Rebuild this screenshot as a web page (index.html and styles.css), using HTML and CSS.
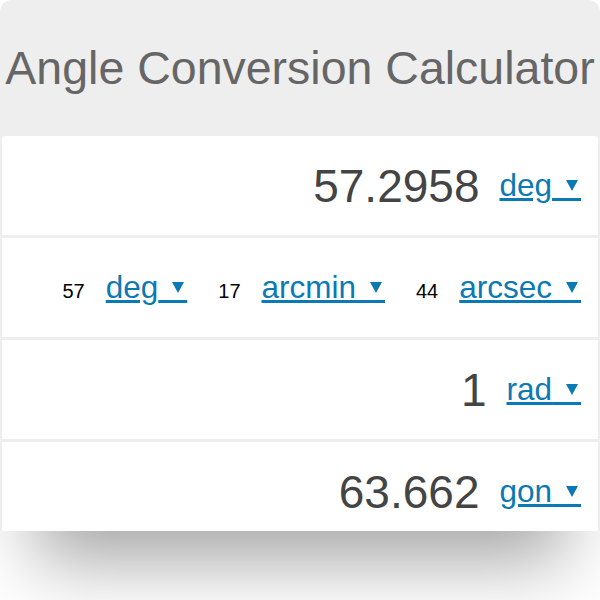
FILE: index.html
```html
<!DOCTYPE html>
<html>
<head>
<meta charset="utf-8">
<link rel="stylesheet" href="styles.css">
</head>
<body>
<div class="page">
<div class="card">
  <div class="header"><h1 class="title">Angle Conversion Calculator</h1></div>
  <div class="rows">
    <div class="row">
      <span class="value">57.2958</span>
      <a class="unit" href="#">deg<span class="caret">&nbsp;&nbsp;&nbsp;</span></a>
    </div>
    <div class="row">
      <div class="dms">
        <span class="num">57</span>
        <a class="unit" href="#">deg<span class="caret">&nbsp;&nbsp;&nbsp;</span></a>
        <span class="num">17</span>
        <a class="unit" href="#">arcmin<span class="caret">&nbsp;&nbsp;&nbsp;</span></a>
        <span class="num">44</span>
        <a class="unit" href="#">arcsec<span class="caret">&nbsp;&nbsp;&nbsp;</span></a>
      </div>
    </div>
    <div class="row">
      <span class="value">1</span>
      <a class="unit" href="#">rad<span class="caret">&nbsp;&nbsp;&nbsp;</span></a>
    </div>
    <div class="row">
      <span class="value">63.662</span>
      <a class="unit" href="#">gon<span class="caret">&nbsp;&nbsp;&nbsp;</span></a>
    </div>
  </div>
</div>
</div>
</body>
</html>
```
FILE: styles.css
```css
html, body {
  margin: 0;
  padding: 0;
  background: #ffffff;
}
body {
  font-family: "Liberation Sans", Arial, sans-serif;
}
.page {
  height: 600px;
  overflow: hidden;
}
.card {
  width: 600px;
  height: 531px;
  overflow: hidden;
  background: #eeeeee;
  border-radius: 12px 12px 0 0;
  box-shadow: 0 64px 70px -35px rgba(0, 0, 0, 0.36);
}
.header {
  height: 136px;
  display: flex;
  align-items: center;
  justify-content: center;
}
.title {
  margin: 0;
  font-weight: normal;
  font-size: 46.5px;
  color: #666666;
  white-space: nowrap;
}
.rows {
  display: flex;
  flex-direction: column;
  gap: 3px;
  padding: 0 2px;
}
.row {
  height: 99px;
  flex: none;
  background: #ffffff;
  display: flex;
  align-items: center;
  justify-content: flex-end;
  padding-right: 17px;
}
.row:first-child {
  border-radius: 3px 3px 0 0;
}
.value {
  font-size: 46px;
  color: #444444;
  margin-right: 20px;
}
.unit {
  font-size: 31.5px;
  color: #0b79b3;
  text-decoration: underline;
  white-space: nowrap;
}
.caret {
  position: relative;
  letter-spacing: 0.9px;
}
.caret::after {
  content: "";
  position: absolute;
  right: 3.5px;
  top: 13px;
  width: 0;
  height: 0;
  border-left: 6.5px solid transparent;
  border-right: 6.5px solid transparent;
  border-top: 11px solid currentColor;
}
.dms {
  display: flex;
  align-items: baseline;
}
.num {
  font-size: 20px;
  color: #000000;
  margin-right: 21px;
}
.dms .unit {
  margin-right: 31px;
}
.dms .unit:last-child {
  margin-right: 0;
}
```
